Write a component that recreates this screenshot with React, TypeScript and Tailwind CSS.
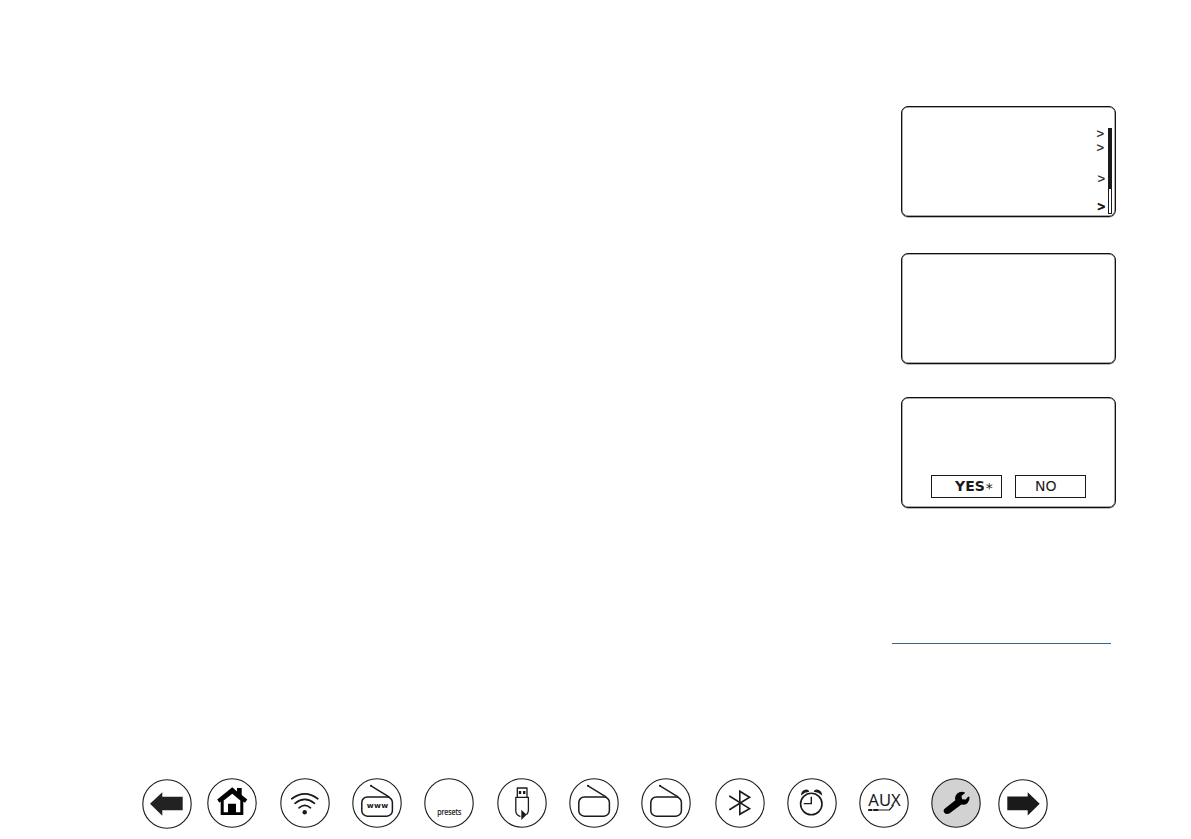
import type { ReactNode } from "react";
import clsx from "clsx";

type ScreenProps = { className?: string; children?: ReactNode };
function Screen({ className, children }: ScreenProps) {
  return (
    <div
      className={clsx(
        "w-[215px] h-[111px] rounded-[7px] border border-[#111] shadow-[0_0.5px_0_0_#777,inset_0_0_0_0.5px_#555]",
        className
      )}
    >
      {children}
    </div>
  );
}

type NavButtonProps = { label: string; className?: string; active?: boolean; children: ReactNode };
function NavButton({ label, className, active, children }: NavButtonProps) {
  return (
    <button aria-label={label} className={clsx("w-[50px] h-[50px] shrink-0", className)}>
      <svg
        viewBox="0 0 50 50"
        className="block w-[50px] h-[50px]"
        fill="none"
        stroke="#1a1a1a"
        strokeLinecap="round"
        strokeLinejoin="round"
      >
        <circle cx="25" cy="25" r="24.2" strokeWidth="1.1" fill={active ? "#d2d2d2" : "#fff"} />
        {children}
      </svg>
    </button>
  );
}

function Radio() {
  return (
    <g>
      <rect x="9.8" y="19" width="30.6" height="19.2" rx="5.5" strokeWidth="1.5" />
      <path d="M19 7.8 37 18.8" strokeWidth="1.4" />
      <circle cx="19" cy="7.8" r="1" fill="#1a1a1a" stroke="none" />
    </g>
  );
}

function App() {
  return (
    <div className="flex h-[839px] w-[1191px] flex-col overflow-hidden bg-white font-['DejaVu_Sans',sans-serif] text-[#1a1a1a]">
      <main className="flex h-[778px] flex-col items-end pt-[106px] pr-[75px]">
        <Screen className="flex justify-end pt-[20px] pr-[3px]">
          <div className="mr-[3px] flex flex-col items-end font-['Liberation_Sans',sans-serif] text-[13px] leading-[14px] [-webkit-text-stroke:0.2px_#1a1a1a]">
            <span className="mr-px">&gt;</span>
            <span className="mr-px">&gt;</span>
            <span className="mt-[17px]">&gt;</span>
            <span className="mt-[14px] [-webkit-text-stroke:0.8px_#1a1a1a]">&gt;</span>
          </div>
          <div className="mt-px flex h-[86px] w-1 flex-col border border-[#1a1a1a]">
            <div className="h-[60px] bg-[#1a1a1a]" />
          </div>
        </Screen>

        <Screen className="mt-[36px]" />

        <Screen className="mt-[33px] flex gap-[13px] pt-[77px] pl-[29px]">
          <button className="flex h-[23px] w-[71px] items-center border border-[#1a1a1a] pb-[2px] pl-[23px] text-[14px] leading-none font-bold">
            YES<span className="ml-px pt-[4px] text-[14px] leading-none font-normal">*</span>
          </button>
          <button className="flex h-[23px] w-[71px] items-center border border-[#1a1a1a] pb-[2px] pl-[19px] text-[14px] leading-none">
            NO
          </button>
        </Screen>

        <div className="mt-[135px] mr-[5px] h-px w-[219px] bg-[#3b6484]" />
      </main>

      <nav className="flex pl-[142px]">
        <NavButton label="Previous page" className="mt-px">
          <path
            d="M8 24.7 20.3 13.3V17.7H40.7V31.3H20.3V36.7Z"
            fill="#222"
            stroke="none"
          />
        </NavButton>
        <NavButton label="Home" className="ml-[15px]">
          <path
            d="M25.3 9.3 30 13.5V10H34.7V17L40.3 21.6 38 24.7 36.3 23.4V37H13.7V23.6L12.4 24.7 10.2 21.6Z"
            fill="#000"
            stroke="none"
          />
          <path d="M25.3 15.8 33.3 22.6V34.3H29V25.7H21V34.3H16.7V22.6Z" fill="#fff" stroke="none" />
        </NavButton>
        <NavButton label="Wi-Fi" className="ml-[23px]">
          <path d="M11.8 20.8Q24.8 11 37.8 20.8M15 25.3Q24.8 17.6 34.5 25.3M19 29.8Q24.8 25 30.5 29.8" strokeWidth="1.7" />
          <circle cx="24.7" cy="34.3" r="2.2" fill="#1a1a1a" stroke="none" />
        </NavButton>
        <NavButton label="Internet radio" className="ml-[22px]">
          <Radio />
          <text x="14.8" y="30.1" textLength="21.5" fontSize="7.5" fontWeight="bold" fill="#1a1a1a" stroke="none">
            www
          </text>
        </NavButton>
        <NavButton label="Presets" className="ml-[22px]">
          <text
            x="13.2"
            y="36.6"
            textLength="24.3"
            lengthAdjust="spacingAndGlyphs"
            fontSize="8"
            fill="#1a1a1a"
            strokeWidth="0.2"
            className="font-['Noto_Sans',sans-serif]"
          >
            presets
          </text>
        </NavButton>
        <NavButton label="USB" className="ml-[23px]">
          <path d="M20.3 19.3V10H30V19.3" strokeWidth="1.3" />
          <path d="M18.8 19.3H31.4V32.5Q31.2 34.8 29.8 36.2M18.8 19.3V33Q19 37 23 38.3" strokeWidth="1.3" />
          <path d="M21.8 13H24.2V16H21.8ZM26 13H28.4V16H26Z" fill="#1a1a1a" stroke="none" />
          <path d="M24.3 31.8 29.6 36.7 24.3 42Z" fill="#1a1a1a" stroke="none" />
        </NavButton>
        <NavButton label="DAB radio" className="ml-[22px]">
          <Radio />
        </NavButton>
        <NavButton label="FM radio" className="ml-[22px]">
          <Radio />
        </NavButton>
        <NavButton label="Bluetooth" className="ml-[24px]">
          <path d="M14.8 18.2 34.6 30.6 24.8 36.3V13.3L34.6 19.3 14.8 31.5" strokeWidth="1.6" strokeLinejoin="miter" />
        </NavButton>
        <NavButton label="Alarm" className="ml-[22px]">
          <circle cx="24.3" cy="26" r="10.7" strokeWidth="1.6" />
          <path d="M24.3 18.7V25.6H16.7" strokeWidth="1.4" strokeLinecap="butt" strokeLinejoin="miter" />
          <path
            d="M13.9 17.4Q14.2 12 19.4 11.6Q21.7 11.7 22.3 13.8Q17.8 14.2 13.9 17.4ZM35.2 17.4Q34.8 12 29.6 11.6Q27.3 11.7 26.7 13.8Q31.2 14.2 35.2 17.4Z"
            fill="#1a1a1a"
            stroke="none"
          />
        </NavButton>
        <NavButton label="AUX" className="ml-[22px]">
          <text
            x="9.3"
            y="28.3"
            textLength="32.4"
            lengthAdjust="spacingAndGlyphs"
            fontSize="15.5"
            fill="#1a1a1a"
            stroke="none"
            className="font-['Noto_Sans',sans-serif]"
          >
            AUX
          </text>
          <path d="M18 32H30.3L34.2 27.6" strokeWidth="1.2" />
          <path d="M9.2 32H13.4M14.2 32H19.2" strokeWidth="2" strokeLinecap="butt" />
        </NavButton>
        <NavButton label="Settings" className="ml-[22px]" active>
          <path
            d="M13.3 31 24.3 22.2Q23.4 18.4 26 15.7Q29 13 33.5 14.2L34 15.2L30.5 17.8L31 21.3L34.7 21.6L37.3 18.6L38.5 19Q39 22.6 36.4 25.2Q34 27.2 30.4 26.6L18.7 35.2Q15.6 37 13.3 34.7Q11.7 32.7 13.3 31Z"
            fill="#000"
            stroke="none"
          />
        </NavButton>
        <NavButton label="Next page" className="mt-px ml-[17px]">
          <path
            d="M41.7 24.7 29.7 13.3V17.5H9.3V31.3H29.7V36.5Z"
            fill="#1a1a1a"
            stroke="none"
          />
        </NavButton>
      </nav>
    </div>
  );
}
export default App;
